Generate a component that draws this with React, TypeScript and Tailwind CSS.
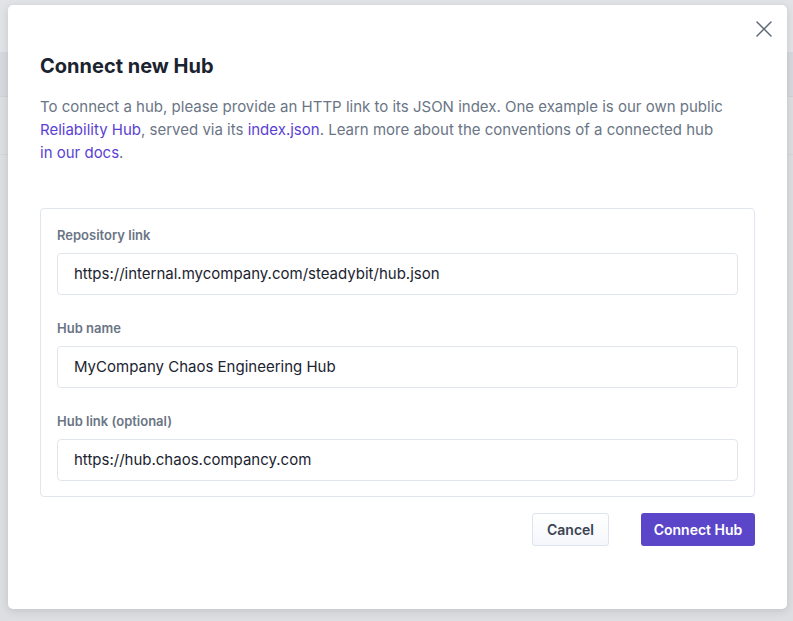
import { X } from 'lucide-react';

const fields = [
  { label: 'Repository link', value: 'https://internal.mycompany.com/steadybit/hub.json' },
  { label: 'Hub name', value: 'MyCompany Chaos Engineering Hub' },
  { label: 'Hub link (optional)', value: 'https://hub.chaos.compancy.com' },
];

export default function App() {
  return (
    <div
      className="relative h-[621px] w-[793px] overflow-hidden bg-[#dcdee1]"
      style={{ fontFamily: 'Inter, "Noto Sans", sans-serif' }}
    >
      {/* page behind the overlay */}
      <div className="h-[52px] bg-[#e1e3e6]" />
      <div className="h-[45px] border-b border-[#cfd3d8] bg-[#d6d9dd]" />
      <div className="h-[58px] border-b border-[#d3d6da]" />

      {/* Modal */}
      <div className="absolute left-[8px] top-[5px] flex h-[604px] w-[779px] flex-col rounded-[5px] bg-white px-[32px] pt-[47px] shadow-[0_2px_8px_rgba(0,0,0,0.12)]">
        <button className="absolute right-[9px] top-[10px] text-[#5f6b7a]">
          <X className="h-[28px] w-[28px]" strokeWidth={1.3} />
        </button>

        <h1 className="text-[20px] font-bold leading-[28px] text-[#1b2330]">Connect new Hub</h1>

        <p className="mt-[15px] pr-[30px] text-[15px] leading-[23px] text-[#6a7585]">
          To connect a hub, please provide an HTTP link to its JSON index. One example is our own public{' '}
          <a className="text-[#5b3fd3]">Reliability Hub</a>, served via its{' '}
          <a className="text-[#5b3fd3]">index.json</a>. Learn more about the conventions of a connected hub{' '}
          <a className="text-[#5b3fd3]">in our docs</a>.
        </p>

        <div className="mt-[44px] flex flex-col gap-[24px] rounded-[4px] border border-[#e1e6ee] px-[16px] pb-[15px] pt-[17px]">
          {fields.map((f) => (
            <div key={f.label} className="flex flex-col gap-[9px]">
              <label className="text-[13px] font-semibold leading-[18px] text-[#6a7585]">{f.label}</label>
              <div className="flex h-[42px] items-center rounded-[4px] border border-[#e1e6ee] px-[16px] text-[15px] text-[#1b2330]">
                {f.value}
              </div>
            </div>
          ))}
        </div>

        <div className="mt-[16px] flex justify-end gap-[32px]">
          <button className="h-[33px] w-[77px] rounded-[3px] border border-[#dde4ee] bg-gradient-to-b from-white to-[#f4f7fb] text-[14px] font-semibold text-[#3b4452]">
            Cancel
          </button>
          <button className="h-[33px] w-[114px] rounded-[3px] bg-[#5b46c9] text-[14px] font-semibold text-white">
            Connect Hub
          </button>
        </div>
      </div>
    </div>
  );
}
